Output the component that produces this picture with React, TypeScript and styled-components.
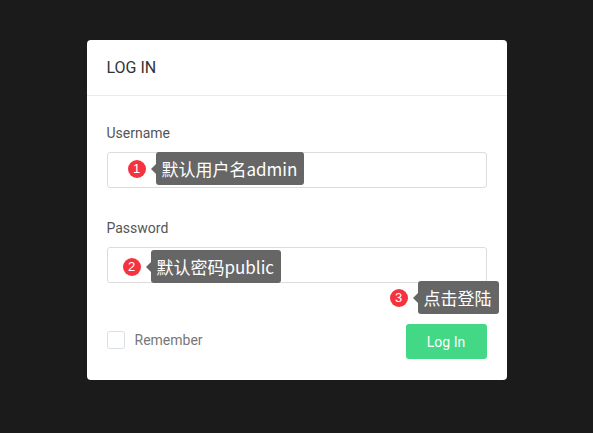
import React from 'react';
import styled, {createGlobalStyle} from 'styled-components';

const GlobalStyle = createGlobalStyle`
  html, body {
    margin: 0;
    padding: 0;
    background: #1b1b1b;
  }
  body {
    font-family: Roboto, "Noto Sans CJK SC", sans-serif;
  }
`;

const Page = styled.div`
  width: 593px;
  height: 433px;
  padding-top: 40px;
  box-sizing: border-box;
  display: flex;
  justify-content: center;
  align-items: flex-start;
`;

const Card = styled.div`
  position: relative;
  width: 420px;
  height: 340px;
  background: #fff;
  border-radius: 4px;
  display: flex;
  flex-direction: column;
`;

const Header = styled.div`
  height: 55px;
  padding: 0 20px;
  display: flex;
  align-items: center;
  border-bottom: 1px solid #ebebeb;
  font-size: 16px;
  color: #333;
`;

const Body = styled.div`
  padding: 27px 20px 0;
  display: flex;
  flex-direction: column;
`;

const Field = styled.div<{$gap?: number}>`
  display: flex;
  flex-direction: column;
  gap: 9px;
  margin-bottom: ${({$gap}) => $gap ?? 0}px;
`;

const Label = styled.label`
  font-size: 14px;
  line-height: 20px;
  color: #555;
`;

const InputWrap = styled.div`
  position: relative;
  height: 36px;
  border: 1px solid #dcdcdc;
  border-radius: 3px;
  box-sizing: border-box;
`;

const Footer = styled.div`
  margin-top: 41px;
  display: flex;
  align-items: center;
  justify-content: space-between;
`;

const Remember = styled.label`
  display: flex;
  align-items: center;
  gap: 10px;
  font-size: 14px;
  color: #777;
  margin-top: -3px;
`;

const Checkbox = styled.span`
  width: 18px;
  height: 18px;
  box-sizing: border-box;
  border: 1px solid #dcdfe6;
  border-radius: 3px;
`;

const LoginButton = styled.button`
  width: 81px;
  height: 35px;
  border: none;
  border-radius: 3px;
  background: #42d885;
  color: #fff;
  font-family: Roboto, sans-serif;
  font-size: 14px;
  cursor: pointer;
`;

const Annotation = styled.div<{$top: number; $left: number}>`
  position: absolute;
  top: ${({$top}) => $top}px;
  left: ${({$left}) => $left}px;
  display: flex;
  align-items: center;
  gap: 10px;
  z-index: 2;
`;

const Badge = styled.span`
  width: 18px;
  height: 18px;
  border-radius: 50%;
  background: #f5333f;
  color: #fff;
  font-size: 13px;
  display: flex;
  align-items: center;
  justify-content: center;
  font-family: "Liberation Sans", sans-serif;
`;

const Tip = styled.span`
  position: relative;
  height: 33px;
  line-height: 33px;
  padding: 0 7px 0 6px;
  background: #666;
  color: #fff;
  border-radius: 3px;
  font-size: 17px;
  font-family: "Noto Sans CJK SC", Roboto, sans-serif;
  white-space: nowrap;

  &::before {
    content: '';
    position: absolute;
    left: -5px;
    top: 50%;
    margin-top: -5px;
    border-style: solid;
    border-width: 5px 5px 5px 0;
    border-color: transparent #666 transparent transparent;
  }
`;

const Note = ({n, text, top, left}: {n: number; text: string; top: number; left: number}) => (
  <Annotation $top={top} $left={left}>
    <Badge>{n}</Badge>
    <Tip>{text}</Tip>
  </Annotation>
);

export default function App() {
  return (
    <>
      <GlobalStyle />
      <Page>
        <Card>
          <Header>LOG IN</Header>
          <Body>
            <Field $gap={30}>
              <Label>Username</Label>
              <InputWrap>
                <Note n={1} text="默认用户名admin" top={-1} left={20} />
              </InputWrap>
            </Field>
            <Field>
              <Label>Password</Label>
              <InputWrap>
                <Note n={2} text="默认密码public" top={2} left={15} />
              </InputWrap>
            </Field>
            <Footer>
              <Remember>
                <Checkbox />
                Remember
              </Remember>
              <LoginButton>Log In</LoginButton>
            </Footer>
          </Body>
          <Note n={3} text="点击登陆" top={241} left={303} />
        </Card>
      </Page>
    </>
  );
}
